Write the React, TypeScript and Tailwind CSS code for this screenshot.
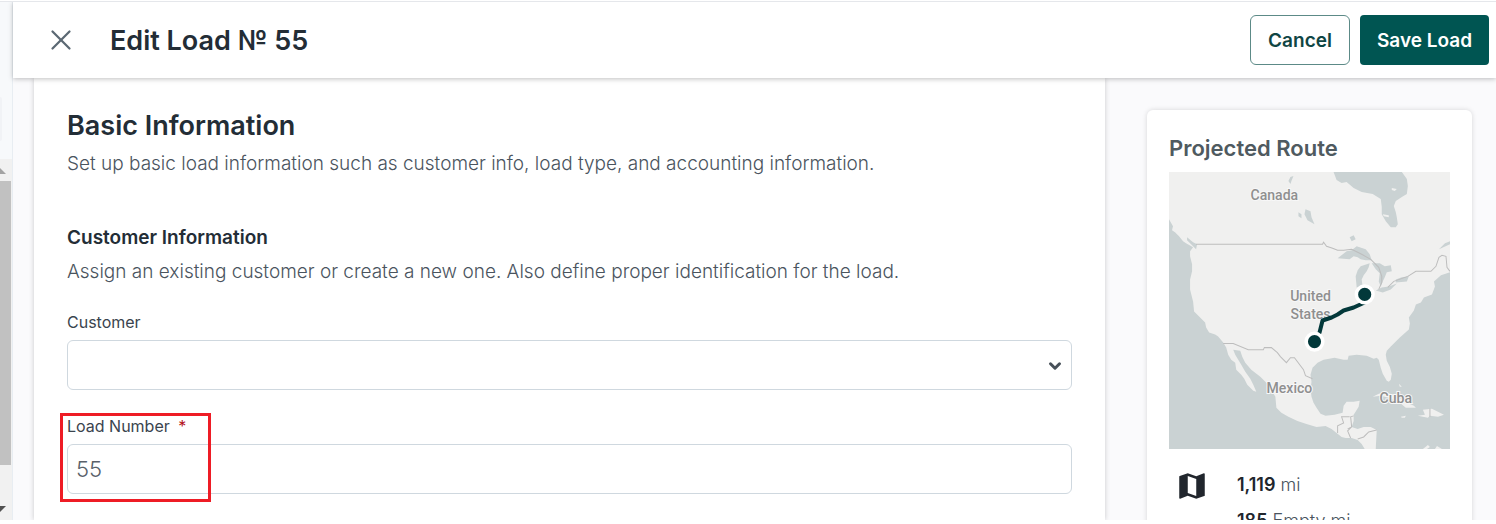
import { useState } from "react";
import { ChevronDown, X } from "lucide-react";
import { MdMap } from "react-icons/md";

function RouteMap() {
  return (
    <svg
      viewBox="0 0 280 276"
      className="block w-full"
      role="img"
      aria-label="Projected route map"
    >
      <rect width="280" height="276" fill="#cad2d3" />
      {/* mainland */}
      <path
        fill="#f0f0ef"
        d="M0 0H280V69L275 71 269 77 280 72V100L271 103 264 109 265 114 262 122 254 125 251 130 246 132 244 138 239 145 240 151 239 157 230 165 221 174 217 178 216 182 217 188 220 194 222 201 221 207 219 209 217 208 213 201 211 195 209 187 207 185 204 186 197 183 187 182 179 183 178 187 174 187 165 185 154 187 148 190 143 195 141 202 142 209 141 217 142 224 144 230 147 235 151 241 156 243 165 242 173 240 174 233 177 229 184 229 190 228 189 234 184 242 184 248 182 254 188 256 194 254 201 254 207 257 206 276H195L192 271 188 267 182 265 176 265 172 264 167 260 162 256 156 253 147 254 137 251 128 248 119 244 112 240 107 235 106 224 99 212 91 204 82 197 76 190 73 184 71 178 64 177 66 182 69 187 72 192 76 199 81 206 84 212 87 219 84 218 78 212 75 206 72 202 67 197 66 190 62 187 59 182 57 175 54 170 49 164 46 162 40 160 37 155 36 150 30 144 25 139 24 129 21 117 21 107 23 99 23 92 21 84 21 79 24 75 17 71 14 69 10 64 6 60 3 58 4 54 0 47Z"
      />
      {/* bays and lakes */}
      <g fill="#cad2d3">
        <path d="M164 0 167 8 172 11 177 10 184 16 192 20 203 22 211 27 212 35 212 42 216 49 221 55 226 55 228 52 227 45 226 40 224 34 226 29 232 25 237 22 238 14 237 7 232 0Z" />
        <path d="M136 37 141 39 142 45 145 52 138 48 135 42ZM129 40 132 42 132 46 129 44ZM121 5 124 4 122 9 121 12 119 9ZM180 65 184 63 186 67 182 69Z" />
        <path d="M168 86 177 79 182 78 187 74 196 77 200 82 202 88 196 88 191 87 188 85 184 84 180 87Z" />
        <path d="M191 94 200 91 199 95 197 99 194 103 192 107 193 115 187 115 186 104 188 98Z" />
        <path d="M202 91 210 91 215 94 221 93 222 99 217 100 215 105 213 109 211 114 209 109 210 101 206 97Z" />
        <path d="M206 118 212 115 219 114 227 111 221 117 213 120ZM226 107 232 105 239 104 237 109 226 110Z" />
        <path d="M18 65 24 70 28 72 27 77 23 73 18 68Z" />
      </g>
      {/* islands */}
      <g fill="#f0f0ef">
        <path d="M203 224 209 221 217 220 227 223 235 229 244 233 246 235 236 235 230 230 219 225 211 223ZM231 244 236 243 235 245 232 245ZM248 243 255 242 253 237 262 236 274 242 268 244 260 243 258 245ZM229 211 232 214 230 214ZM253 276 258 272 260 274 257 276ZM265 276 267 273 272 276Z" />
        <path d="M222 16 227 17 225 19 222 18ZM213 42 219 43 219 45 214 44Z" />
      </g>
      <g fill="none" stroke="#bdbdbd" strokeWidth="1">
        <path d="M27 72H153L154 70 157 74 163 76 168 78 174 78 182 77 192 82 201 87 209 95 212 104 212 110 209 117M218 115 224 109 238 104 246 99H261L266 94 269 85 272 83 276 84 277 95 280 99" />
        <path d="M54 171H64L79 177H94L95 175H102L108 180 111 184 117 190 121 185H125L134 197 136 203 143 206" />
        <path d="M184 243 181 244 182 254 178 258 181 265M180 244H172L174 250 168 253 168 260M207 257 199 259 194 264 188 266M182 254 178 256M260 236V244" />
      </g>
      <g
        fill="#8f8f8f"
        stroke="#f7f7f7"
        strokeWidth="2"
        paintOrder="stroke"
        textAnchor="middle"
        className="font-[Roboto,sans-serif] text-[14px] font-medium"
      >
        <text x="105" y="28">Canada</text>
        <text x="141" y="129">United</text>
        <text x="141" y="146">States</text>
        <text x="120" y="220">Mexico</text>
        <text x="226" y="230">Cuba</text>
      </g>
      <path
        d="M195 130 184 135 174 138 168 142 162 145 153 148 150 160 145 169"
        fill="none"
        stroke="#02383a"
        strokeWidth="4"
        strokeLinejoin="round"
      />
      <g fill="#02383a" stroke="#fff" strokeWidth="3.5">
        <circle cx="195" cy="122" r="8.3" />
        <circle cx="145" cy="169" r="8.3" />
      </g>
    </svg>
  );
}

export default function App() {
  const [loadNumber, setLoadNumber] = useState("55");

  return (
    <div className="h-screen overflow-hidden bg-white pt-px pb-1 font-[Inter,sans-serif] text-[#232d36]">
      <div className="flex h-full overflow-hidden border-t border-gray-200 bg-[#fafafc]">
        {/* edge of the page behind the drawer */}
        <div className="flex w-3 shrink-0 flex-col bg-[#f7f9fb]">
          <div className="flex h-[157px] flex-col justify-end pb-[18px]">
            <div className="mr-[10px] h-11 rounded-r bg-[#f1f3f6]" />
          </div>
          <div className="flex flex-1 flex-col bg-[#f1f1f1] pb-2">
            <svg viewBox="0 0 12 22" className="h-[22px] w-3">
              <path d="M0 9 6 15H0Z" fill="#a3a3a3" />
            </svg>
            <div className="mr-px h-[284px] bg-[#c1c1c1]" />
            <svg viewBox="0 0 12 6" className="mt-auto h-[6px] w-3">
              <path d="M0 0H6L0 6Z" fill="#505050" />
            </svg>
          </div>
        </div>

        <div className="flex min-w-0 flex-1 flex-col border-l border-[#e8edf2]">
          <header className="z-10 flex h-[76px] shrink-0 items-center bg-white pr-[7px] pl-[31px] shadow-[0_1px_5px_rgba(0,0,0,0.25)]">
            <button type="button" aria-label="Close" className="text-[#5b6873]">
              <X size={34} strokeWidth={1.6} />
            </button>
            <h1 className="ml-8 pt-0.5 text-[27px] leading-8 font-semibold">
              Edit Load № 55
            </h1>
            <div className="ml-auto flex gap-[10px] text-[19px] font-semibold">
              <button
                type="button"
                className="h-[50px] w-[100px] rounded-md border border-[#5c8a87] pt-0.5 text-[#0f4644]"
              >
                Cancel
              </button>
              <button
                type="button"
                className="h-[50px] w-[129px] rounded-sm bg-[#005552] pt-0.5 text-white"
              >
                Save Load
              </button>
            </div>
          </header>

          <div className="flex min-h-0 flex-1 items-start gap-[42px] pr-6 pl-[21px]">
            <main className="min-w-0 flex-1 self-stretch bg-white px-[33px] pt-8 shadow-[0_0_5px_rgba(0,0,0,0.2)]">
              <h2 className="text-[27px] leading-8 font-semibold">
                Basic Information
              </h2>
              <p className="mt-[10px] text-[19px] leading-6 font-light text-[#4a545e]">
                Set up basic load information such as customer info, load type,
                and accounting information.
              </p>
              <h3 className="mt-[50px] text-[19px] leading-6 font-semibold">
                Customer Information
              </h3>
              <p className="mt-[10px] text-[19px] leading-6 font-light text-[#4a545e]">
                Assign an existing customer or create a new one. Also define
                proper identification for the load.
              </p>

              <div className="mt-[26px]">
                <label htmlFor="customer" className="block text-base text-[#3a444e]">
                  Customer
                </label>
                <div className="relative mt-[6px]">
                  <select
                    id="customer"
                    className="block h-[50px] w-full appearance-none rounded-md border border-[#cfd8df] bg-white px-2"
                  />
                  <ChevronDown
                    size={18}
                    strokeWidth={4}
                    className="pointer-events-none absolute top-[17px] right-2 text-[#475059]"
                  />
                </div>
              </div>

              <div className="relative mt-6">
                <label
                  htmlFor="load-number"
                  className="block text-base text-[#3a444e]"
                >
                  Load Number <span className="ml-1 text-[#b3131b]">*</span>
                </label>
                <input
                  id="load-number"
                  type="text"
                  value={loadNumber}
                  onChange={(e) => setLoadNumber(e.target.value)}
                  className="mt-[6px] block h-[50px] w-full rounded-md border border-[#cfd8df] bg-white px-2 text-[22px] font-light text-[#59616a]"
                />
                <div className="pointer-events-none absolute -top-px -bottom-2 -left-[7px] w-[151px] border-[3px] border-[#ee1c25]" />
              </div>
            </main>

            <aside className="mt-8 w-[325px] shrink-0 rounded-md bg-white px-[22px] pt-[22px] pb-6 shadow-[0_0_5px_rgba(0,0,0,0.15)]">
              <h2 className="text-[22px] leading-8 font-semibold text-[#4f5a60]">
                Projected Route
              </h2>
              <div className="mt-2">
                <RouteMap />
              </div>
              <div className="mt-5 flex items-start pl-[6px]">
                <MdMap size={34} className="text-[#21262d]" />
                <div className="ml-7 text-[18px] leading-8 font-light text-[#4a545e]">
                  <p>
                    <span className="font-semibold text-[#21262d]">1,119</span> mi
                  </p>
                  <p className="mt-1">
                    <span className="font-semibold text-[#21262d]">185</span>{" "}
                    Empty mi
                  </p>
                </div>
              </div>
            </aside>
          </div>
        </div>
      </div>
    </div>
  );
}
